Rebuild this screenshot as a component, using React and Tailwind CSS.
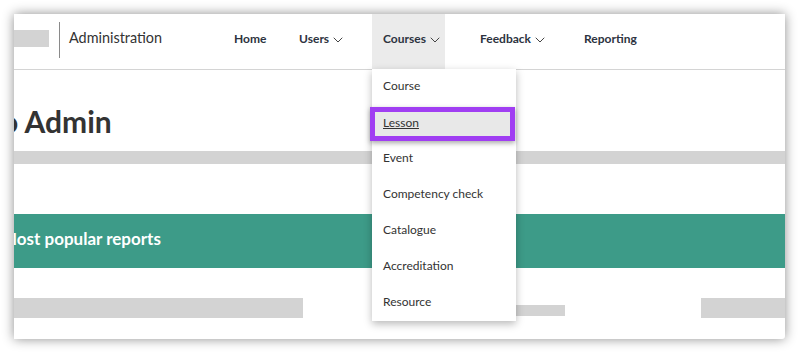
import React from "react";

function Chevron() {
  return (
    <svg width="10" height="6" viewBox="0 0 10 6" className="ml-[4px] mt-[2px]" fill="none">
      <path d="M1 1l4 4 4-4" stroke="#444" strokeWidth="1" strokeLinecap="round" strokeLinejoin="round" />
    </svg>
  );
}

const items = ["Course", "Lesson", "Event", "Competency check", "Catalogue", "Accreditation", "Resource"];

export default function App() {
  return (
    <div className="w-[799px] h-[353px] bg-white overflow-hidden pt-[14px] pl-[14px]" style={{ fontFamily: "Lato, 'Open Sans', sans-serif" }}>
      <div className="relative w-[771px] h-[325px] bg-white shadow-[0_0_12px_rgba(0,0,0,0.45)] rounded-br-[3px]">
        <div className="absolute inset-0 overflow-hidden">
          {/* header */}
          <div className="h-[56px] border-b border-[#d4d4d4] flex items-center">
            <div className="w-[35px] h-[17px] bg-[#d3d3d3] mb-[6px]" />
            <div className="ml-[10px] w-px h-[36px] bg-[#8a8a8a] mb-[4px]" />
            <div className="ml-[9px] text-[14.4px] text-[#333] leading-none mb-[6px]">Administration</div>
            <div className="flex h-full ml-[61px] text-[12px] font-bold text-[#2d3340]">
              <div className="flex items-center pl-[11px] w-[65px] pb-[6px]">Home</div>
              <div className="flex items-center pl-[11px] w-[84px] pb-[6px]">Users<Chevron /></div>
              <div className="flex items-center pl-[11px] w-[73px] bg-[#ebebeb] pb-[6px]">Courses<Chevron /></div>
              <div className="flex items-center pl-[35px] w-[139px] pb-[6px]">Feedback<Chevron /></div>
              <div className="flex items-center pb-[6px]">Reporting</div>
            </div>
          </div>
          {/* title */}
          <div className="h-[81px] flex items-end pb-[15px]">
            <div className="ml-[-24px] text-[30px] font-bold text-[#333] leading-none whitespace-nowrap">to Admin</div>
          </div>
          <div className="h-[13px] bg-[#d3d3d3]" />
          <div className="h-[50px]" />
          <div className="h-[54px] bg-[#3d9b88] flex items-center">
            <div className="ml-[-13px] text-[17px] font-bold text-white leading-none whitespace-nowrap pb-[5px]">Most popular reports</div>
          </div>
          <div className="flex items-start mt-[30px]">
            <div className="w-[289px] h-[20px] bg-[#d3d3d3]" />
            <div className="ml-[212px] mt-[7px] w-[50px] h-[11px] bg-[#d3d3d3]" />
            <div className="ml-[136px] w-[84px] h-[20px] bg-[#d3d3d3]" />
          </div>
        </div>
        {/* dropdown */}
        <div className="absolute left-[358px] top-[55px] w-[144px] bg-white shadow-[0_3px_8px_rgba(0,0,0,0.28)] text-[12px] text-[#333]">
          {items.map((it) => (
            <div key={it} className="h-[36px] flex items-center pl-[11px] pb-[2px]">
              {it === "Lesson" ? <span className="underline">{it}</span> : it}
            </div>
          ))}
        </div>
        {/* highlight */}
        <div className="absolute left-[356px] top-[93px] w-[145px] h-[34px] border-[5px] border-[#a03ef2] bg-[#e8e8e8] shadow-[0_2px_5px_rgba(0,0,0,0.35)] flex items-center pl-[8px] pb-[3px] text-[12px] text-[#333]">
          <span className="underline">Lesson</span>
        </div>
      </div>
    </div>
  );
}
